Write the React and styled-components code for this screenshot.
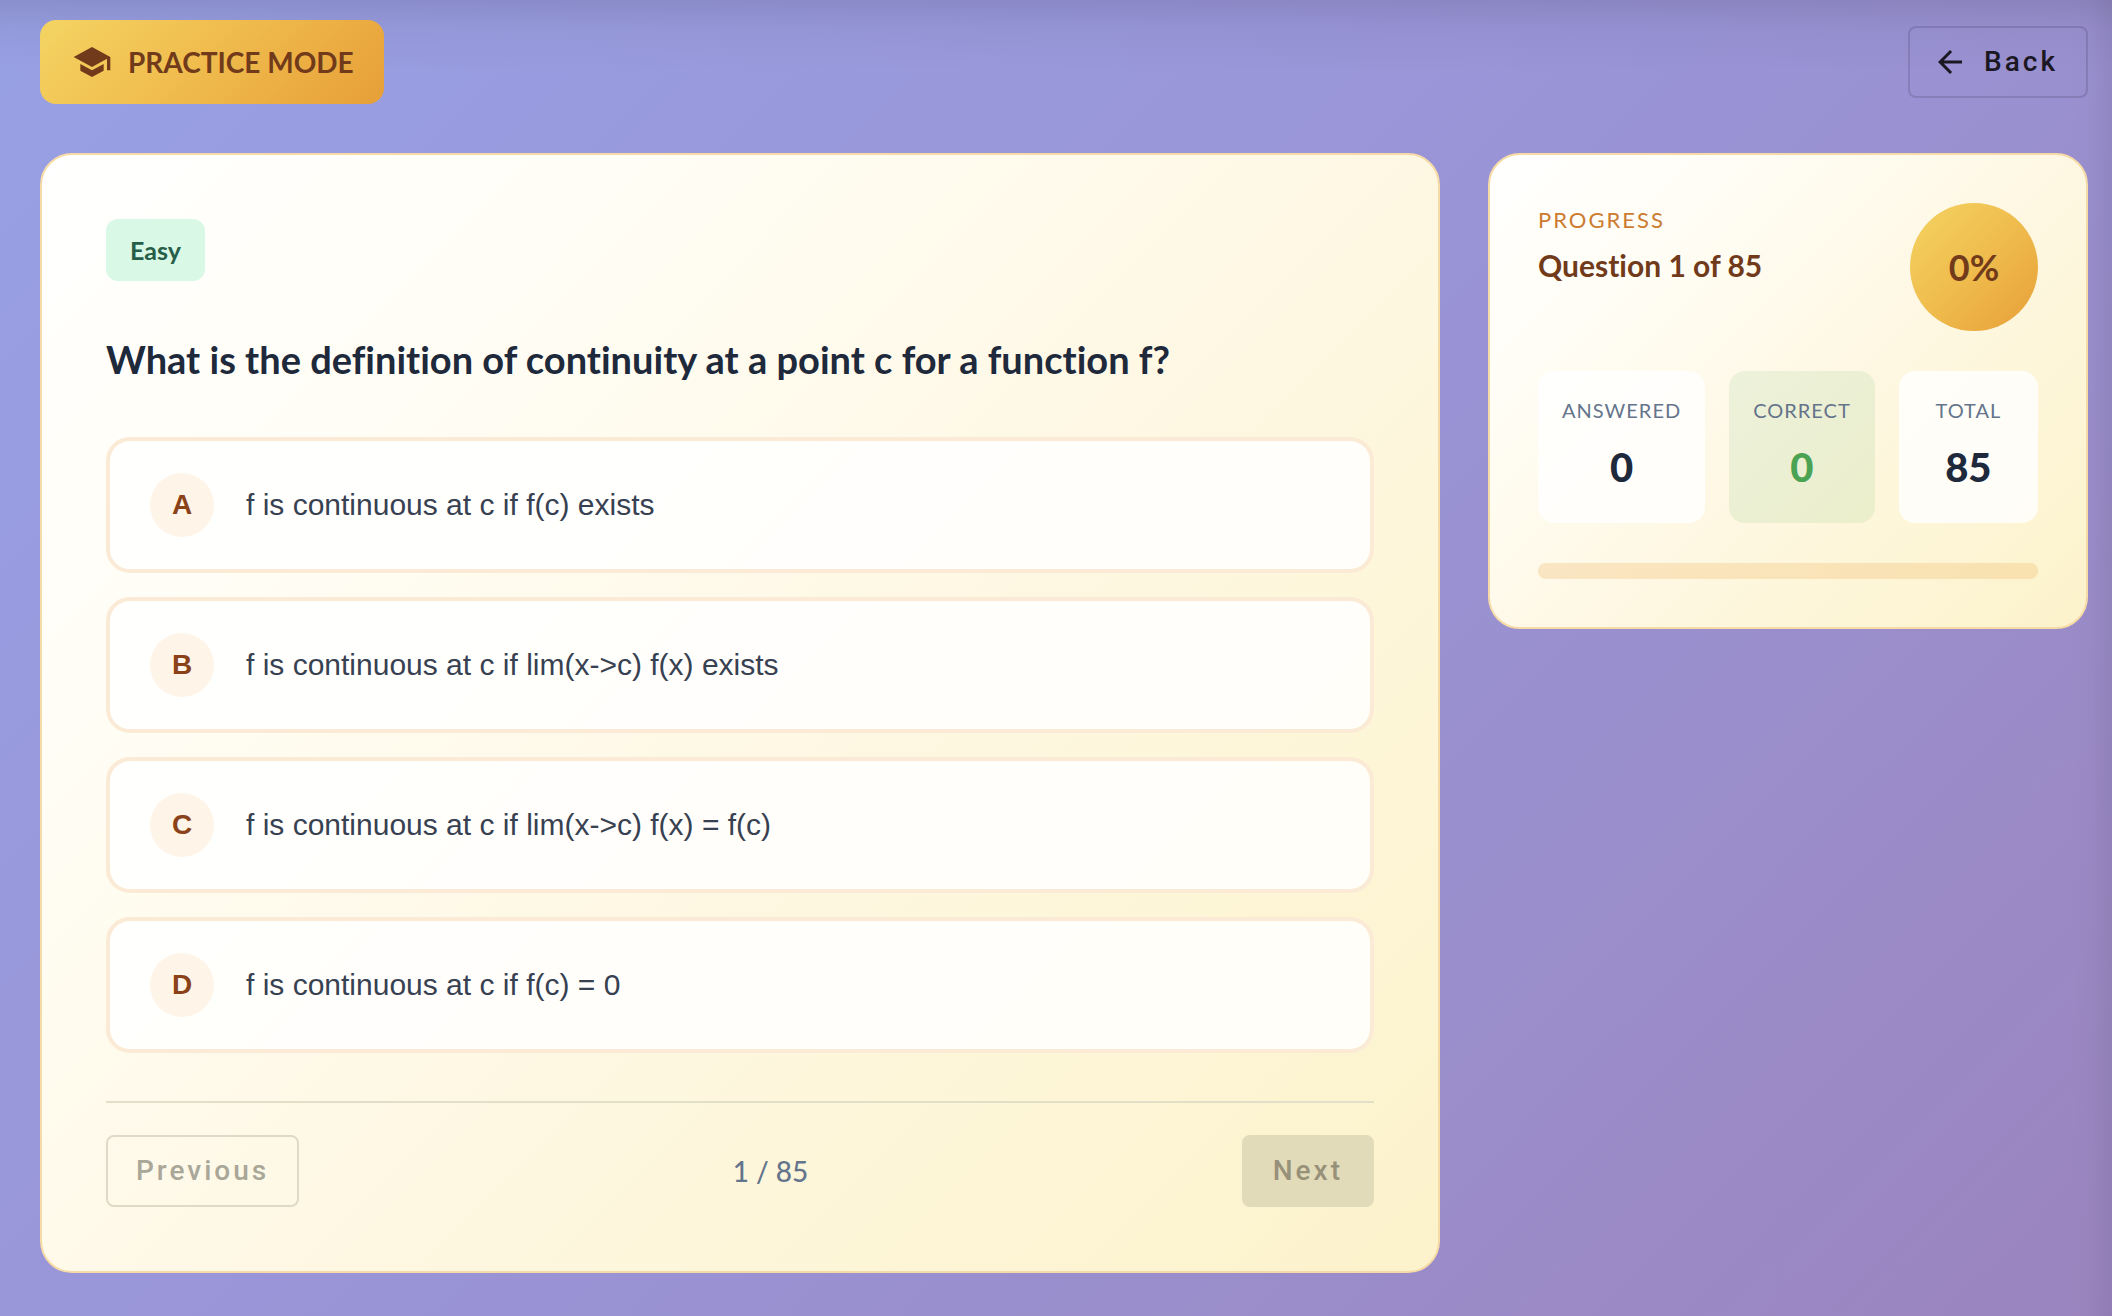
import React from "react";
import styled, { createGlobalStyle } from "styled-components";

const GlobalStyle = createGlobalStyle`
  *, *::before, *::after { box-sizing: border-box; }
  html, body, #root { min-height: 100vh; }
  body {
    margin: 0;
    font-family: Lato, "Liberation Sans", sans-serif;
    font-variant-ligatures: none;
    color: #1e293b;
  }
`;

const Page = styled.div`
  min-height: 100vh;
  padding: 20px 24px 40px 40px;
  background:
    linear-gradient(to left, rgba(70, 65, 95, 0.12), rgba(70, 65, 95, 0.03) 20px, transparent 40px),
    linear-gradient(to bottom, rgba(70, 65, 95, 0.18), rgba(70, 65, 95, 0.06) 28px, transparent 72px),
    linear-gradient(135deg, #98a0e4 0%, #9995d8 45%, #9a8dca 75%, #9b84bf 100%);
`;

const TopBar = styled.header`
  display: flex;
  justify-content: space-between;
  align-items: center;
  margin-bottom: 49px;
`;

const ModeBadge = styled.div`
  display: flex;
  align-items: center;
  gap: 16px;
  height: 84px;
  padding: 0 30px 0 32px;
  border-radius: 16px;
  background: linear-gradient(135deg, #f4d463 0%, #f0bd4e 45%, #e79f38 100%);
  color: #713a1a;
  font-size: 28px;
  line-height: 32px;
  font-weight: 700;
  white-space: nowrap;
`;

const Icon = styled.svg`
  display: block;
  flex: none;
  width: ${(p) => p.$size}px;
  height: ${(p) => p.$size}px;
  fill: currentColor;
`;

const Button = styled.button`
  display: inline-flex;
  align-items: center;
  gap: 16px;
  height: 72px;
  padding: 0 ${(p) => (p.$solid ? 31 : 28)}px;
  border: ${(p) => (p.$solid ? "0" : "2px solid")};
  border-color: ${(p) => (p.disabled ? "#dddbc8" : "rgba(60, 50, 90, 0.2)")};
  border-radius: 8px;
  background: ${(p) => (p.$solid ? "#e2dbb9" : "transparent")};
  color: ${(p) => (p.$solid ? "#989179" : p.disabled ? "#a9a798" : "#1b1824")};
  font-family: Roboto, "Liberation Sans", sans-serif;
  font-size: 28px;
  line-height: 32px;
  font-weight: 500;
  letter-spacing: 3px;
`;

const BackButton = styled(Button)`
  padding: 0 28px 0 22px;
`;

const Columns = styled.main`
  display: grid;
  grid-template-columns: minmax(0, 1fr) 600px;
  align-items: start;
  gap: 48px;
`;

const Card = styled.section`
  padding: ${(p) => p.$pad}px;
  border: 2px solid #f7dba6;
  border-radius: 32px;
  background: linear-gradient(135deg, #ffffff 0%, #fffdf3 28%, #fef8e6 50%, #fdf6d9 72%, #fcf2cb 100%);
`;

const Difficulty = styled.span`
  display: inline-flex;
  align-items: center;
  height: 62px;
  padding: 0 24px;
  border-radius: 12px;
  background: #d9f8e5;
  color: #265e48;
  font-size: 25px;
  font-weight: 700;
`;

const Question = styled.h1`
  margin: 52px 0;
  color: #1e293b;
  font-size: 38px;
  line-height: 52px;
  font-weight: 700;
`;

const Options = styled.div`
  display: grid;
  gap: 24px;
`;

const Option = styled.button`
  display: flex;
  align-items: center;
  gap: 32px;
  width: 100%;
  height: 136px;
  padding: 0 40px;
  border: 4px solid #fbead5;
  border-radius: 24px;
  background: rgba(255, 255, 255, 0.85);
  background-clip: padding-box;
  color: #374151;
  font-family: "Liberation Sans", Arial, sans-serif;
  font-size: 30px;
  text-align: left;
`;

const Letter = styled.span`
  display: grid;
  place-items: center;
  flex: none;
  width: 64px;
  height: 64px;
  border-radius: 50%;
  background: #fef5e8;
  color: #8a4218;
  font-size: 28px;
  font-weight: 700;
`;

const Pager = styled.nav`
  display: flex;
  justify-content: space-between;
  align-items: center;
  margin-top: 48px;
  padding-top: 32px;
  border-top: 2px solid #e2dfc9;
`;

const PageCount = styled.span`
  color: #64748b;
  font-size: 28px;
  line-height: 32px;
  font-weight: 500;
`;

const ProgressHead = styled.div`
  display: flex;
  justify-content: space-between;
  align-items: flex-start;
  margin-bottom: 40px;
`;

const Overline = styled.div`
  color: #cc7b30;
  font-size: 22px;
  line-height: 34px;
  letter-spacing: 2px;
`;

const Position = styled.h2`
  margin: 8px 0 0;
  color: #713a1a;
  font-size: 30px;
  line-height: 40px;
  font-weight: 700;
`;

const Percent = styled.div`
  display: grid;
  place-items: center;
  width: 128px;
  height: 128px;
  border-radius: 50%;
  background: linear-gradient(135deg, #f4d463 0%, #efbc4d 50%, #e79f38 100%);
  color: #713a1a;
  font-size: 36px;
  font-weight: 700;
`;

const Stats = styled.dl`
  display: grid;
  grid-template-columns: repeat(3, 1fr);
  gap: 24px;
  margin: 0 0 40px;
`;

const Stat = styled.div`
  height: 152px;
  padding: 24px;
  border-radius: 16px;
  background: ${(p) => (p.$correct ? "rgba(76, 175, 80, 0.1)" : "rgba(255, 255, 255, 0.8)")};
  text-align: center;
`;

const StatLabel = styled.dt`
  color: #64748b;
  font-size: 20px;
  line-height: 30px;
  letter-spacing: 1px;
`;

const StatValue = styled.dd`
  margin: 16px 0 0;
  color: ${(p) => (p.$correct ? "#4aa253" : "#1e293b")};
  font-size: 40px;
  line-height: 52px;
  font-weight: 900;
`;

const Bar = styled.progress`
  display: block;
  appearance: none;
  width: 100%;
  height: 16px;
  border: 0;
  border-radius: 8px;
  overflow: hidden;
  background: rgba(240, 170, 80, 0.25);
  &::-webkit-progress-bar { background: transparent; }
  &::-webkit-progress-value { background: #f0b040; }
`;

const options = [
  ["A", "f is continuous at c if f(c) exists"],
  ["B", "f is continuous at c if lim(x->c) f(x) exists"],
  ["C", "f is continuous at c if lim(x->c) f(x) = f(c)"],
  ["D", "f is continuous at c if f(c) = 0"],
];

const stats = [
  { label: "ANSWERED", value: 0 },
  { label: "CORRECT", value: 0, correct: true },
  { label: "TOTAL", value: 85 },
];

export default function App() {
  return (
    <>
      <GlobalStyle />
      <Page>
        <TopBar>
          <ModeBadge>
            <Icon $size={40} viewBox="0 0 24 24" aria-hidden="true">
              <path d="M5 13.18v4L12 21l7-3.82v-4L12 17l-7-3.82zM12 3 1 9l11 6 9-4.91V17h2V9L12 3z" />
            </Icon>
            PRACTICE MODE
          </ModeBadge>
          <BackButton type="button">
            <Icon $size={36} viewBox="0 0 24 24" aria-hidden="true">
              <path d="M20 11H7.83l5.59-5.59L12 4l-8 8 8 8 1.41-1.41L7.83 13H20v-2z" />
            </Icon>
            Back
          </BackButton>
        </TopBar>
        <Columns>
          <Card $pad={64}>
            <Difficulty>Easy</Difficulty>
            <Question>What is the definition of continuity at a point c for a function f?</Question>
            <Options>
              {options.map(([letter, text]) => (
                <Option type="button" key={letter}>
                  <Letter>{letter}</Letter>
                  <span>{text}</span>
                </Option>
              ))}
            </Options>
            <Pager aria-label="Questions">
              <Button type="button" disabled>Previous</Button>
              <PageCount>1 / 85</PageCount>
              <Button type="button" disabled $solid>Next</Button>
            </Pager>
          </Card>
          <Card $pad={48}>
            <ProgressHead>
              <div>
                <Overline>PROGRESS</Overline>
                <Position>Question 1 of 85</Position>
              </div>
              <Percent>0%</Percent>
            </ProgressHead>
            <Stats>
              {stats.map((s) => (
                <Stat key={s.label} $correct={s.correct}>
                  <StatLabel>{s.label}</StatLabel>
                  <StatValue $correct={s.correct}>{s.value}</StatValue>
                </Stat>
              ))}
            </Stats>
            <Bar value={0} max={85} aria-label="Progress" />
          </Card>
        </Columns>
      </Page>
    </>
  );
}
